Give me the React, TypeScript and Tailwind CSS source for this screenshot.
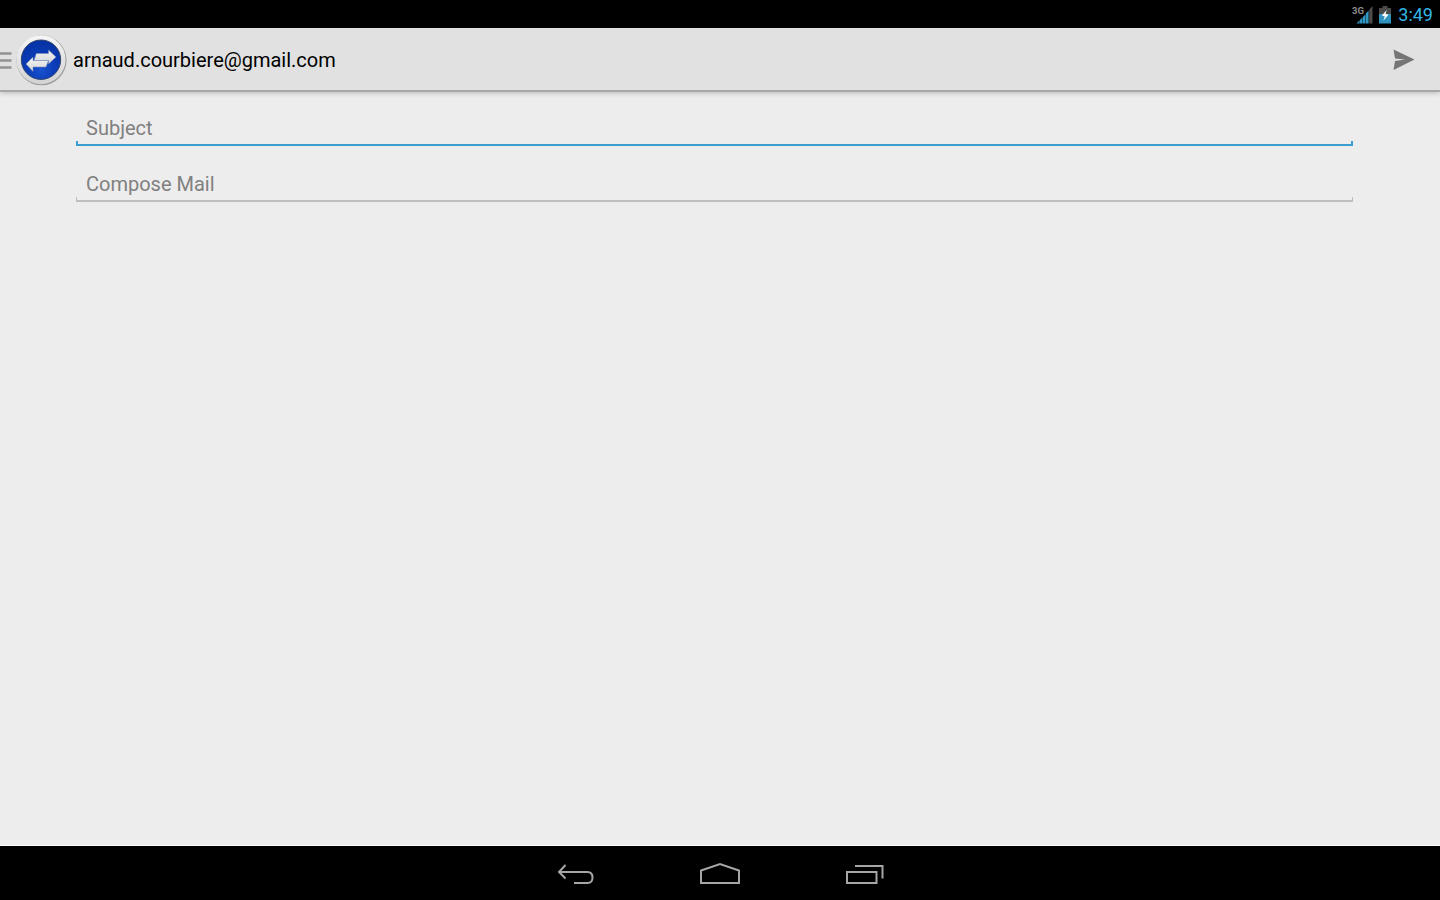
import React, { useState } from 'react';

const SignalIcon: React.FC = () => (
  <svg width="22" height="22" viewBox="0 0 22 22" aria-hidden="true">
    <text x="0" y="9.500" fontSize="9.500" fontWeight="700" fill="#8c8c8c" fontFamily="Roboto, sans-serif">3G</text>
    <path d="M4.500 19.500h2.700v-2.700zM7.600 19.500h2.700v-6L7.600 16.200zM10.700 19.500h2.700v-9l-2.700 2.700zM13.800 19.500h2.800V6.500L13.800 9.500z" fill="#3096c2" />
    <path d="M17.200 19.500h3.300V2L17.200 5.800z" fill="#4c4c4c" />
  </svg>
);

const BatteryIcon: React.FC = () => (
  <svg width="12" height="18" viewBox="0 0 12 18" aria-hidden="true">
    <path d="M3.500 0h5v2H12v7H0V2h3.500z" fill="#4a4a4a" />
    <path d="M0 8h12v9.500H0z" fill="#2f92bd" />
    <path d="M7.800 4L2.800 9.500l3 1-1.500 4.300L9.500 8.700l-3-1z" fill="#fff" />
  </svg>
);

const LogoIcon: React.FC = () => (
  <svg width="54" height="54" viewBox="0 0 54 54" aria-hidden="true">
    <defs>
      <linearGradient id="ring" x1="0" y1="0" x2="0" y2="1">
        <stop offset="0" stopColor="#f6f6f6" />
        <stop offset="1" stopColor="#d2d2d2" />
      </linearGradient>
      <radialGradient id="disc" cx="0.5" cy="0.75" r="0.75">
        <stop offset="0" stopColor="#1a52d0" />
        <stop offset="0.5" stopColor="#0b3bb6" />
        <stop offset="1" stopColor="#0632a2" />
      </radialGradient>
      <linearGradient id="arrow" x1="0" y1="0" x2="0" y2="1">
        <stop offset="0" stopColor="#f4f4f4" />
        <stop offset="1" stopColor="#d6d6d8" />
      </linearGradient>
    </defs>
    <circle cx="27.500" cy="27.300" r="25" fill="#9a9a9a" />
    <circle cx="27" cy="26.700" r="24.500" fill="url(#ring)" />
    <circle cx="27" cy="26.700" r="19.700" fill="url(#disc)" stroke="#34466f" />
    <path
      d="M22.300 20.500H34.500V17L42 24L34.500 31V27.500H20Z"
      fill="url(#arrow)"
      stroke="#7487b0"
      strokeWidth="0.500"
    />
    <path
      d="M19 24V27.500H34.500L32 34H19V38.500L12 31Z"
      fill="url(#arrow)"
      stroke="#7487b0"
      strokeWidth="0.500"
    />
  </svg>
);

type FieldProps = {
  id: string;
  label: string;
  autoFocus?: boolean;
};

const Field: React.FC<FieldProps> = ({ id, label, autoFocus }) => {
  const [value, setValue] = useState("");

  return (
    <div className="flex flex-col">
      <input
        id={id}
        type="text"
        value={value}
        aria-label={label}
        placeholder={label}
        autoFocus={autoFocus}
        onChange={e => setValue(e.target.value)}
        className="peer w-full h-7 px-2.5 text-xl leading-7 bg-transparent text-black placeholder:text-[#808080] placeholder-shown:caret-transparent outline-none"
      />
      <div className="h-[5px] -mt-px border-x border-b-2 border-[#bebebe] peer-focus:border-x-2 peer-focus:border-[#3a9fd0]" />
    </div>
  );
};

const App: React.FC = () => {
  return (
    <div className="min-h-screen flex flex-col bg-[#ededed] font-[Roboto,sans-serif]">

      {/* Status bar */}
      <div className="h-7 flex items-center justify-end bg-black pt-px pr-[7px]">
        <SignalIcon />
        <span className="ml-[5px] mr-[7px] flex"><BatteryIcon /></span>
        <span className="text-lg leading-7 text-[#33b5e5]">3:49</span>
      </div>

      {/* Action bar */}
      <header className="h-16 flex items-center bg-[#e1e1e1] pt-px border-b-2 border-[#a8a8a8] shadow-[0_1px_5px_rgba(0,0,0,0.22)]">
        <button type="button" aria-label="Open menu" className="flex items-center">
          <svg width="14" height="54" viewBox="0 0 14 54" aria-hidden="true">
            <path d="M0 20.500h11.500M0 27.500h11.500M0 34.500h11.500" stroke="#929292" strokeWidth="2.500" />
          </svg>
          <LogoIcon />
        </button>
        <h1 className="ml-[5px] text-xl leading-7 text-black">arnaud.courbiere@gmail.com</h1>
        <button type="button" aria-label="Send" className="ml-auto mr-6">
          <svg width="24" height="22" viewBox="0 0 24 22" aria-hidden="true">
            <path d="M1.500 0.500L22.500 10.500L1.500 21L3 12L13 10.500L3 9.500Z" fill="#757575" />
          </svg>
        </button>
      </header>

      {/* Message form */}
      <main className="flex-1 flex flex-col gap-6 pt-[22px] pl-[76px] pr-[87px]">
        <Field id="subject" label="Subject" autoFocus />
        <Field id="body" label="Compose Mail" />
      </main>

      {/* Navigation bar */}
      <nav className="h-[55px] flex items-center justify-center gap-[102px] bg-black border-t border-white pt-1">
        <button type="button" aria-label="Back">
          <svg width="42" height="26" viewBox="0 0 42 26" fill="none" stroke="#a6a6a6" strokeWidth="2" aria-hidden="true">
            <path d="M10.500 3L4 10L10.500 16.500M4 10H32.500Q37.500 10 37.500 15.500T32.500 21H19" />
          </svg>
        </button>
        <button type="button" aria-label="Home">
          <svg width="42" height="26" viewBox="0 0 42 26" fill="none" stroke="#a6a6a6" strokeWidth="2" aria-hidden="true">
            <path d="M2 21V8.500L21 2L40 8.500V21Z" />
          </svg>
        </button>
        <button type="button" aria-label="Recent apps">
          <svg width="42" height="26" viewBox="0 0 42 26" fill="none" stroke="#a6a6a6" strokeWidth="2" aria-hidden="true">
            <path d="M4 10H33.500V21H4ZM12 4H39.500V16.500" />
          </svg>
        </button>
      </nav>
    </div>
  );
};

export default App;
